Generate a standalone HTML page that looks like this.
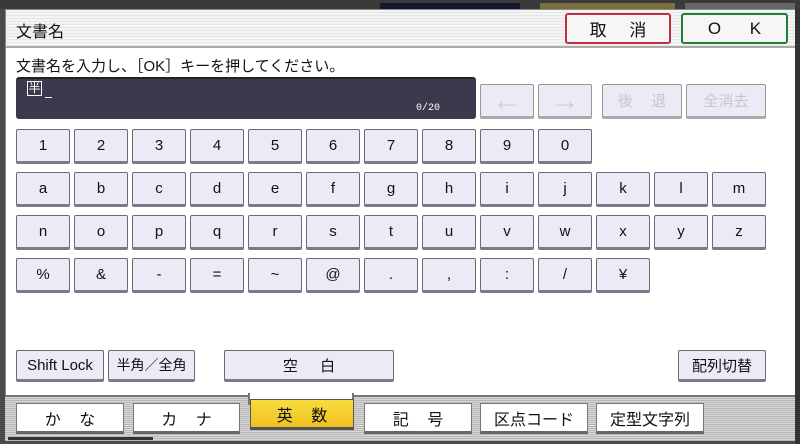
<!DOCTYPE html>
<html><head><meta charset="utf-8"><style>
*{box-sizing:border-box;margin:0;padding:0}
body{width:800px;height:444px;background:#4a4a4a;position:relative;overflow:hidden;font-family:"Liberation Sans","Noto Sans CJK JP",sans-serif;color:#111}
.abs{position:absolute}
.panel{left:5px;top:9px;width:791px;height:432px;background:#fff;border:1px solid #888}
.title{left:6px;top:10px;width:789px;height:38px;background:repeating-linear-gradient(#f4f4f4 0 2px,#e6e6e6 2px 3px);border-bottom:2px solid #aaa}
.k{position:absolute;width:54px;height:35px;background:#ebebf5;border:1px solid #6a6a78;border-bottom:3px solid #7a7a88;border-radius:2px;font-size:15px;display:flex;align-items:center;justify-content:center;color:#111;font-family:"Liberation Sans","Noto Sans CJK JP",sans-serif}
.dis{color:#c8c8c8;border-color:#999;border-bottom-color:#aaa}
.tab{position:absolute;top:403px;height:31px;background:#fff;border:1px solid #777;border-bottom:3px solid #666;font-size:16px;display:flex;align-items:center;justify-content:center;letter-spacing:0}
</style></head><body>
<div class="abs" style="left:0;top:0;width:800px;height:9px;background:#3a3a3a"></div>
<div class="abs" style="left:380px;top:3px;width:140px;height:6px;background:#111a30"></div>
<div class="abs" style="left:540px;top:3px;width:135px;height:6px;background:#7a7040"></div>
<div class="abs" style="left:685px;top:3px;width:110px;height:6px;background:#666"></div>
<div class="abs panel"></div>
<div class="abs title"></div>
<div class="abs" style="left:16px;top:18px;font-size:16px">文書名</div>
<div class="abs" style="left:565px;top:13px;width:106px;height:31px;background:#f6f6f6;border:2px solid #c03040;border-radius:3px;font-size:17px;display:flex;align-items:center;justify-content:center;word-spacing:18px">取 消</div>
<div class="abs" style="left:681px;top:13px;width:107px;height:31px;background:#f6f6f6;border:2px solid #208030;border-radius:3px;font-size:17px;display:flex;align-items:center;justify-content:center;word-spacing:24px">O K</div>
<div class="abs" style="left:16px;top:55px;font-size:15px">文書名を入力し、［OK］キーを押してください。</div>
<div class="abs" style="left:16px;top:77px;width:460px;height:42px;background:#3a3a4c;border-radius:3px;border-top:2px solid #222"></div>
<div class="abs" style="left:27px;top:81px;width:15px;height:15px;border:1px solid #fff;color:#fff;font-size:12px;line-height:13px;text-align:center">半</div>
<div class="abs" style="left:45px;top:97px;width:7px;height:1px;background:#fff"></div>
<div class="abs" style="left:416px;top:103px;color:#fff;font-size:10px;font-family:'Liberation Mono',monospace">0/20</div>
<div class="k dis" style="left:480px;top:84px;font-size:30px;line-height:30px;color:#d0d0d0">←</div>
<div class="k dis" style="left:538px;top:84px;font-size:30px;line-height:30px;color:#d0d0d0">→</div>
<div class="k dis" style="left:602px;top:84px;width:80px;word-spacing:14px">後 退</div>
<div class="k dis" style="left:686px;top:84px;width:80px">全消去</div>

<div class="k" style="left:16px;top:129px">1</div><div class="k" style="left:74px;top:129px">2</div><div class="k" style="left:132px;top:129px">3</div><div class="k" style="left:190px;top:129px">4</div><div class="k" style="left:248px;top:129px">5</div><div class="k" style="left:306px;top:129px">6</div><div class="k" style="left:364px;top:129px">7</div><div class="k" style="left:422px;top:129px">8</div><div class="k" style="left:480px;top:129px">9</div><div class="k" style="left:538px;top:129px">0</div>

<div class="k" style="left:16px;top:172px">a</div><div class="k" style="left:74px;top:172px">b</div><div class="k" style="left:132px;top:172px">c</div><div class="k" style="left:190px;top:172px">d</div><div class="k" style="left:248px;top:172px">e</div><div class="k" style="left:306px;top:172px">f</div><div class="k" style="left:364px;top:172px">g</div><div class="k" style="left:422px;top:172px">h</div><div class="k" style="left:480px;top:172px">i</div><div class="k" style="left:538px;top:172px">j</div><div class="k" style="left:596px;top:172px">k</div><div class="k" style="left:654px;top:172px">l</div><div class="k" style="left:712px;top:172px">m</div>

<div class="k" style="left:16px;top:215px">n</div><div class="k" style="left:74px;top:215px">o</div><div class="k" style="left:132px;top:215px">p</div><div class="k" style="left:190px;top:215px">q</div><div class="k" style="left:248px;top:215px">r</div><div class="k" style="left:306px;top:215px">s</div><div class="k" style="left:364px;top:215px">t</div><div class="k" style="left:422px;top:215px">u</div><div class="k" style="left:480px;top:215px">v</div><div class="k" style="left:538px;top:215px">w</div><div class="k" style="left:596px;top:215px">x</div><div class="k" style="left:654px;top:215px">y</div><div class="k" style="left:712px;top:215px">z</div>

<div class="k" style="left:16px;top:258px">%</div><div class="k" style="left:74px;top:258px">&amp;</div><div class="k" style="left:132px;top:258px">-</div><div class="k" style="left:190px;top:258px">=</div><div class="k" style="left:248px;top:258px">~</div><div class="k" style="left:306px;top:258px">@</div><div class="k" style="left:364px;top:258px">.</div><div class="k" style="left:422px;top:258px">,</div><div class="k" style="left:480px;top:258px">:</div><div class="k" style="left:538px;top:258px">/</div><div class="k" style="left:596px;top:258px">¥</div>

<div class="k" style="left:16px;top:350px;width:88px;height:32px;font-size:15px">Shift Lock</div>
<div class="k" style="left:108px;top:350px;width:87px;height:32px;font-size:14px">半角／全角</div>
<div class="k" style="left:224px;top:350px;width:170px;height:32px;font-size:15px;word-spacing:18px">空 白</div>
<div class="k" style="left:678px;top:350px;width:88px;height:32px;font-size:15px">配列切替</div>

<div class="abs" style="left:5px;top:395px;width:791px;height:46px;background:repeating-linear-gradient(#d8d8d8 0 1px,#b8b8b8 1px 2px);border-top:2px solid #777"></div>
<div class="abs" style="left:248px;top:393px;width:106px;height:12px;background:#fff;border-left:2px solid #777;border-right:2px solid #777"></div>
<div class="abs" style="left:250px;top:393px;width:102px;height:5px;background:#fff"></div>
<div class="abs" style="left:8px;top:437px;width:145px;height:3px;background:#333"></div>
<div class="tab" style="left:16px;width:108px;word-spacing:14px">か な</div>
<div class="tab" style="left:133px;width:107px;word-spacing:14px">カ ナ</div>
<div class="tab" style="left:250px;top:399px;width:104px;background:linear-gradient(#f8dc40,#f0c020);border-color:#555;word-spacing:14px">英 数</div>
<div class="tab" style="left:364px;width:108px;word-spacing:14px">記 号</div>
<div class="tab" style="left:480px;width:108px">区点コード</div>
<div class="tab" style="left:596px;width:108px">定型文字列</div>
<div class="abs" style="left:795px;top:9px;width:5px;height:435px;background:#333"></div>
</body></html>
